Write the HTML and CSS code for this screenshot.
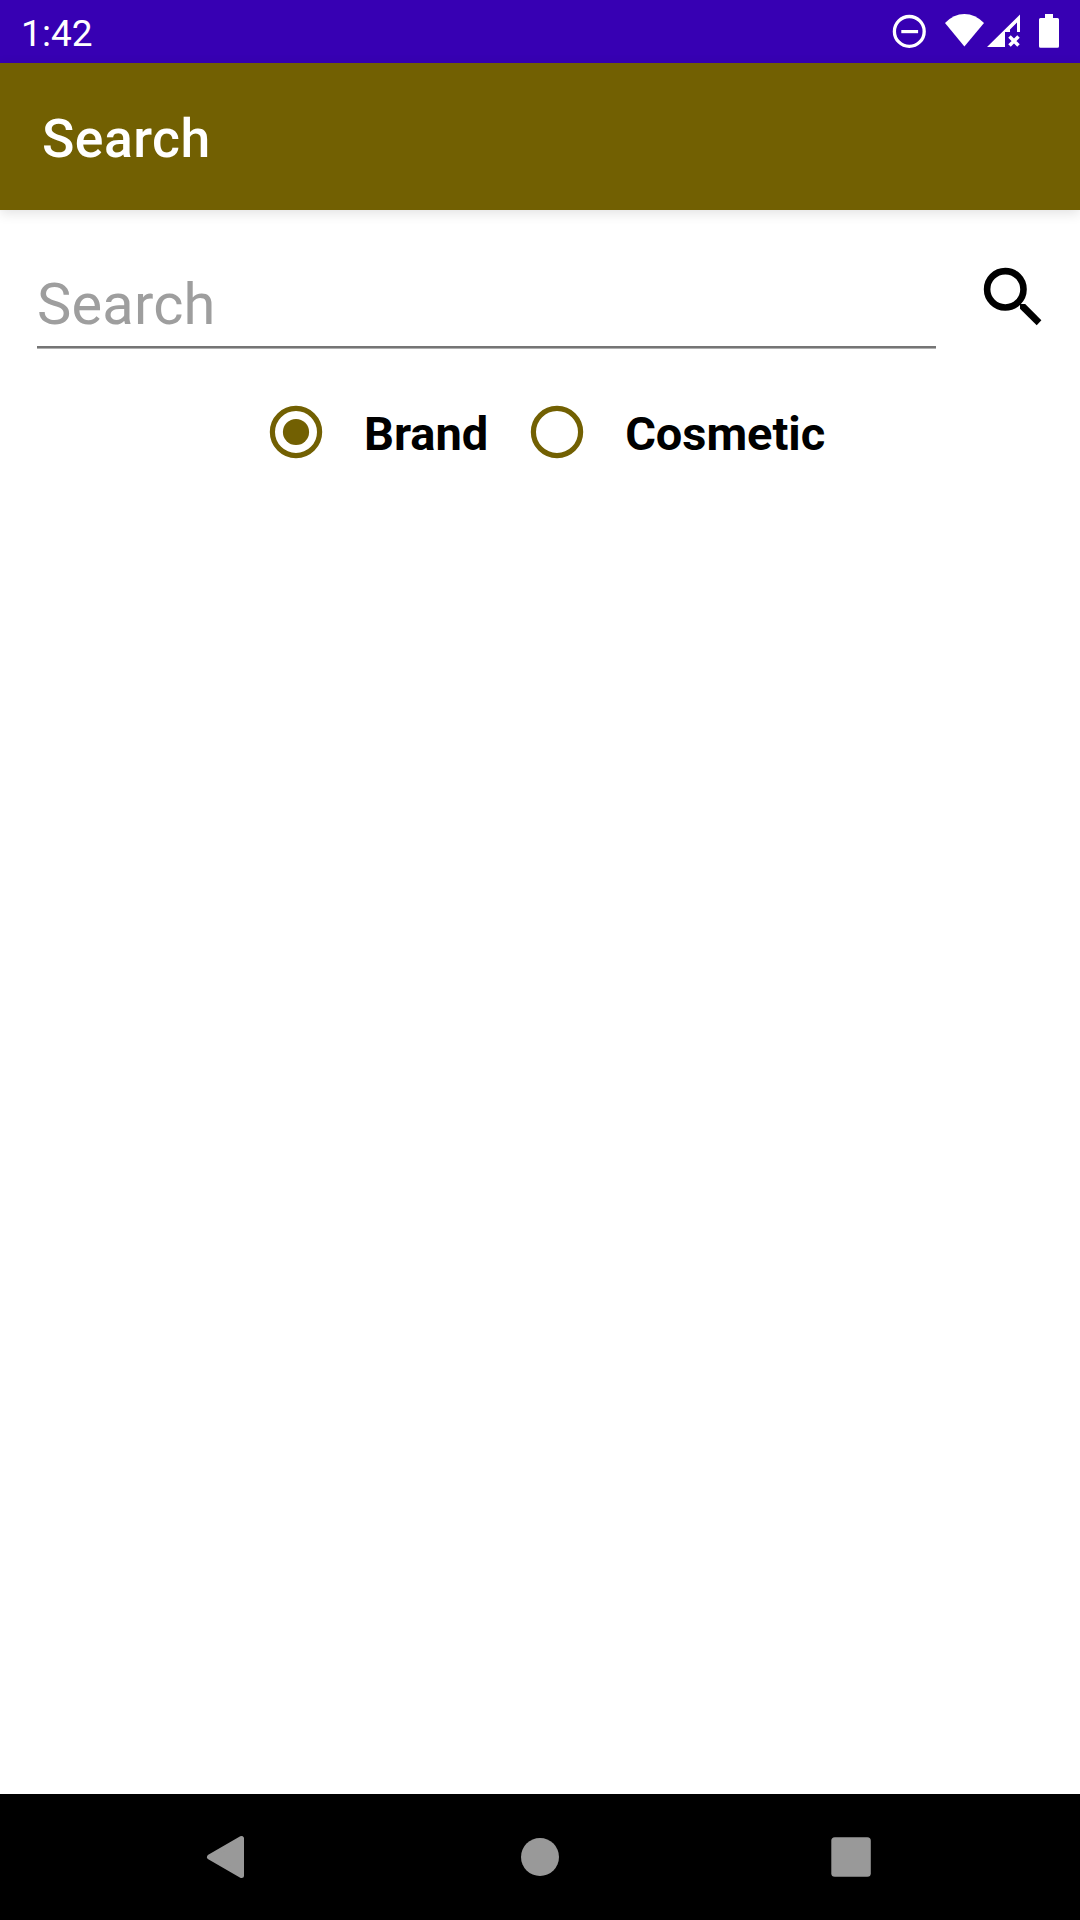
FILE: index.html
```html
<!DOCTYPE html>
<html lang="en">
<head>
<meta charset="utf-8">
<title>Search</title>
<link rel="stylesheet" href="styles.css">
</head>
<body>
<div class="screen">
  <div class="status-bar">
    <span class="clock">1:42</span>
    <svg class="status-icons" viewBox="880 0 200 63" width="200" height="63" fill="#fff">
      <circle cx="909.3" cy="31.4" r="14.9" fill="none" stroke="#fff" stroke-width="3.3"/>
      <path d="M901.3 30h16.8v3.2h-16.8z"/>
      <path d="M964.4 46.5L945 23Q953.500 14 964.400 14T984 23z"/>
      <path d="M987 47L1020 14.500V32h-3V22.500L1010 29.500V32H1005V47z"/>
      <path d="M1009.500 36.500l9 9m0-9l-9 9" fill="none" stroke="#fff" stroke-width="3.500"/>
      <path d="M1045 18v-4h8v4h4.500q1.500 0 1.500 1.500v26.700q0 1.500-1.500 1.500h-17q-1.500 0-1.500-1.500V19.500q0-1.500 1.500-1.500z"/>
    </svg>
  </div>
  <header class="app-bar"><h1 class="title">Search</h1></header>
  <main class="content">
    <div class="search-row">
      <input class="search-field" type="text" placeholder="Search" aria-label="Search">
      <svg class="search-icon" viewBox="983 267 60 60" width="60" height="60">
        <circle cx="1005.300" cy="289.300" r="18.200" fill="none" stroke="#000" stroke-width="6.600"/>
        <path d="M1020 304h5.200L1041.400 320.300 1036.700 325.300 1020 308.700z"/>
      </svg>
    </div>
    <div class="options">
      <label class="option">
        <svg class="radio" viewBox="-42 -42 84 84" width="84" height="84"><circle class="ring" r="23.600"/><circle class="dot" r="13.100"/></svg>
        <span class="option-label">Brand</span>
      </label>
      <label class="option">
        <svg class="radio" viewBox="-42 -42 84 84" width="84" height="84"><circle class="ring" r="23.600"/></svg>
        <span class="option-label">Cosmetic</span>
      </label>
    </div>
  </main>
  <nav class="nav-bar">
    <svg viewBox="190 1794 80 126" width="80" height="126"><path class="back" d="M209.500 1857L241.500 1838.500V1875.500z"/></svg>
    <svg viewBox="500 1794 80 126" width="80" height="126"><circle cx="540" cy="1857" r="19"/></svg>
    <svg viewBox="810 1794 80 126" width="80" height="126"><rect x="831.300" y="1837.300" width="39.500" height="39.500" rx="3.500"/></svg>
  </nav>
</div>
</body>
</html>
```
FILE: styles.css
```css
* { box-sizing: border-box; }
body { margin: 0; background: #fff; font-family: Roboto, sans-serif; }
.screen { display: flex; flex-direction: column; width: 1080px; height: 1920px; }
.status-bar { display: flex; justify-content: space-between; height: 63px; background: #3700b3; color: #fff; }
.clock { padding-left: 21px; font-size: 37px; line-height: 67px; height: 63px; letter-spacing: .1px; }
.app-bar { height: 147px; padding: 4px 42px 0; background: #726002; color: #fff; box-shadow: 0 3px 12px rgba(0, 0, 0, .12); }
.title { margin: 0; font-size: 53.5px; font-weight: 500; line-height: 143px; letter-spacing: .45px; }
.content { flex: 1; padding-top: 52px; }
.search-row { display: flex; gap: 47px; padding-left: 37px; }
.search-field { width: 899px; height: 87px; padding: 0 0 3px; border: 0; box-shadow: inset 0 -1px #b0b0b0, inset 0 -3px #757575; background: none; font: 57.75px/84px Roboto, sans-serif; letter-spacing: .2px; outline: 0; }
.search-field::placeholder { color: #9e9e9e; opacity: 1; }
.search-icon { margin-top: 5px; }
.options { display: flex; gap: 27px; height: 84px; margin-top: 41px; padding-left: 254px; }
.option { display: flex; }
.option-label { padding-left: 26px; font-size: 47px; font-weight: 700; line-height: 88px; letter-spacing: -.05px; }
.radio .ring { fill: none; stroke: #726002; stroke-width: 5.2px; }
.radio .dot { fill: #726002; }
.nav-bar { display: flex; gap: 230px; height: 126px; padding-left: 190px; background: #000; }
.nav-bar svg { fill: #999; }
.nav-bar .back { stroke: #999; stroke-width: 5px; stroke-linejoin: round; }
```
